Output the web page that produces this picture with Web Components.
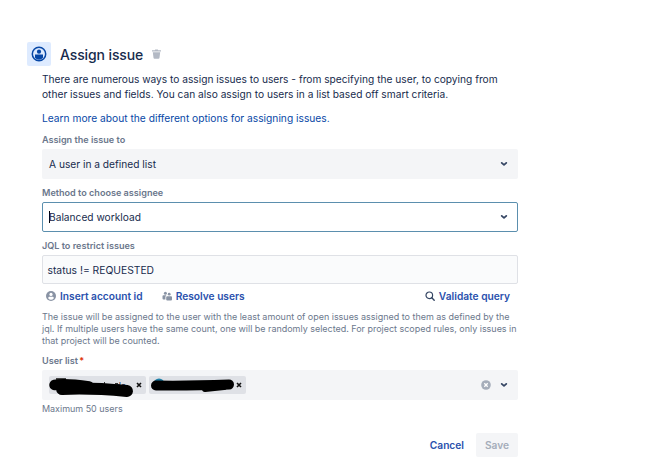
<!DOCTYPE html>
<html lang="en"><head><meta charset="utf-8"><title>Assign issue</title>
<style>
body{margin:0;background:#fff;font-family:Inter,"Liberation Sans",sans-serif;color:#172b4d}
</style></head><body>
<assign-page></assign-page>
<script>
function define(name, html){
  const t=document.createElement('template'); t.innerHTML=html;
  customElements.define(name, class extends HTMLElement{
    constructor(){super();this.attachShadow({mode:'open'}).append(t.content.cloneNode(true));}
  });
}
define('page-title', `<style>
:host{display:flex;align-items:center;height:24px}
.badge{width:24px;height:24px;background:#deebff;border-radius:2px;display:flex;align-items:center;justify-content:center}
h1{margin:0 0 0 9px;font-size:14px;font-weight:500;line-height:24px;letter-spacing:-.12px;white-space:nowrap;padding-top:1px}
svg{display:block}.bin{margin-left:9px}
</style><div class="badge"><svg width="16" height="16" viewBox="0 0 16 16"><circle cx="8" cy="8" r="6.7" fill="none" stroke="#0747a6" stroke-width="1.5"/><circle cx="8" cy="5.7" r="2.1" fill="#0747a6"/><path d="M4 8.5h8v3.2q-1.600 2-4 2t-4-2z" fill="#0747a6"/></svg></div>
<h1><slot></slot></h1><svg class="bin" width="9" height="10" viewBox="0 0 9 10"><path d="M0 1.200h2.800L3.200.4h2.600l.4.800H9v1.400H0zM.8 3.200h7.400L7.500 8.800q-.1.900-1 .9h-4q-.9 0-1-.9z" fill="#b3b9c4"/></svg>`);
define('field-label', `<style>:host{display:block;font-size:9.1px;font-weight:600;line-height:12px;height:12px;color:#6b778c;white-space:nowrap}</style><slot></slot>`);
define('chevron-icon', `<style>:host{display:block;width:8px;height:6px}svg{display:block}</style><svg width="8" height="6" viewBox="0 0 8 6"><path d="M1.700 1.900L4 3.900l2.300-2" fill="none" stroke="#344563" stroke-width="1.800" stroke-linecap="round" stroke-linejoin="round"/></svg>`);
define('select-box', `<style>
:host{display:flex;align-items:center;box-sizing:border-box;height:30px;padding:0 10px 0 7px;background:#f4f5f7;border-radius:2px;font-size:10.2px;color:#172b4d;white-space:nowrap}
:host([focused]){background:#fff;border:1px solid #5b8fae;padding:0 9px 0 6px}
.v{flex:1;display:flex;align-items:center}
.caret{display:none;width:1px;height:12px;background:#000;margin-right:-1px}
:host([focused]) .caret{display:block}
</style><div class="v"><span class="caret"></span><slot></slot></div><slot name="extra"></slot><chevron-icon></chevron-icon>`);
define('text-input', `<style>:host{display:flex;align-items:center;box-sizing:border-box;height:29px;border:1px solid #dfe1e6;border-radius:2px;background:#fafbfc;padding:1px 5px 0 4.500px;font-size:10.3px}</style><slot></slot>`);
define('link-action', `<style>:host{display:flex;align-items:center;height:14px;font-size:10.200px;font-weight:600;color:#2a51ad;white-space:nowrap}::slotted(svg){display:block;margin-right:4px}</style><slot></slot>`);
define('user-tag', `<style>:host{display:flex;align-items:center;justify-content:flex-end;box-sizing:border-box;height:18px;padding-right:4px;background:#dfe1e6;border-radius:2px;position:relative}
.x{display:block;margin-left:10px}.ink{position:absolute;left:0;top:0;display:block}.t{font-size:9px;padding-top:2px}</style><span class="t"><slot></slot></span><svg class="x" width="6" height="6" viewBox="0 0 6 6"><path d="M1 1l4 4M5 1L1 5" stroke="#111" stroke-width="1.600"/></svg><span class="ink"><slot name="ink"></slot></span>`);
define('action-button', `<style>:host{display:flex;align-items:center;justify-content:center;height:24px;font-size:10.200px;font-weight:600;color:#2a51ad}:host([disabled]){width:42px;background:#f4f5f7;border-radius:2px;color:#a5adba}</style><slot></slot>`);
define('assign-page', `<style>
:host{display:block;box-sizing:border-box;width:659px;height:470px;padding:42px 0 0 27px;overflow:hidden}
main{margin-left:15px;width:476px}
p{margin:0;white-space:nowrap}
.desc{padding-top:6px;font-size:10.200px;line-height:15px}
.learn{padding-top:9px;font-size:10.230px;line-height:15px;color:#0747a6}
.l1{margin:8px 0 3px}.l2{margin:8px 0 3px}
.actions{display:flex;margin-top:5px;padding:0 8px 0 4px;align-items:center}
.actions link-action:nth-child(2){margin-left:19px}.actions link-action:last-child{margin-left:auto}
.help{margin-top:8px;font-size:8.960px;line-height:12.200px;color:#6b778c}
.l3{margin-top:7px;margin-bottom:3px}
b{color:#de350b;font-weight:600;margin-left:-1px}
.tags{display:flex;gap:3px}.tags user-tag{width:97px}
.clear{margin-right:9px;display:block}
.max{font-size:8.960px;line-height:12px;color:#6b778c;margin-top:3px}
footer{display:flex;justify-content:flex-end;gap:12px;margin-top:18px}
</style>
<page-title>Assign issue</page-title>
<main>
<p class="desc">There are numerous ways to assign issues to users - from specifying the user, to copying from<br>other issues and fields. You can also assign to users in a list based off smart criteria.</p>
<p class="learn">Learn more about the different options for assigning issues.</p>
<field-label class="l1">Assign the issue to</field-label>
<select-box>A user in a defined list</select-box>
<field-label class="l2">Method to choose assignee</field-label>
<select-box focused>Balanced workload</select-box>
<field-label class="l2">JQL to restrict issues</field-label>
<text-input>status != REQUESTED</text-input>
<div class="actions">
<link-action><svg width="10" height="10" viewBox="0 0 10 10"><circle cx="5" cy="5" r="5" fill="#8993a4"/><circle cx="5" cy="3.400" r="1.600" fill="#fff"/><path d="M2.300 7.500V6.700q0-1 1-1h3.400q1 0 1 1v.8Q6.600 8.700 5 8.700T2.300 7.500z" fill="#fff"/></svg>Insert account id</link-action>
<link-action><svg width="10" height="10" viewBox="0 0 10 10" fill="#8993a4"><circle cx="3.400" cy="2.200" r="1.500"/><circle cx="7.200" cy="3.200" r="1.400"/><path d="M.5 7.500V5.200q0-1 1-1h2.700v.6q-.8.300-.8 1.400v2.300H1.500q-1 0-1-1zM4.200 6.200q0-1 1-1H9q1 0 1 1v2.300q0 1-1 1H5.200q-1 0-1-1z"/></svg>Resolve users</link-action>
<link-action><svg width="10" height="10" viewBox="0 0 10 10"><circle cx="4.300" cy="4.300" r="3.300" fill="none" stroke="#344563" stroke-width="1.200"/><path d="M6.800 6.800l2.400 2.400" stroke="#344563" stroke-width="1.400" stroke-linecap="round"/></svg>Validate query</link-action>
</div>
<p class="help">The issue will be assigned to the user with the least amount of open issues assigned to them as defined by the<br>jql. If multiple users have the same count, one will be randomly selected. For project scoped rules, only issues in<br>that project will be counted.</p>
<field-label class="l3">User list <b>*</b></field-label>
<select-box><div class="tags">
<user-tag>da<svg slot="ink" width="97" height="22" style="display:block;overflow:visible"><path d="M7 2h10v4H7z" fill="#444"/><path d="M55 8.500V6h1v3M66 8.500V7h3v2" fill="#333"/><path d="M5.500 9Q16 7 40 10.500" fill="none" stroke="#000" stroke-width="10.500" stroke-linecap="round"/><path d="M13 13Q40 11.500 78 15" fill="none" stroke="#000" stroke-width="12" stroke-linecap="round"/></svg></user-tag>
<user-tag><svg slot="ink" width="97" height="22" style="display:block;overflow:visible"><circle cx="10" cy="8" r="5.500" fill="#1d7fa8"/><path d="M7 9.500Q40 10 80 8.500" fill="none" stroke="#000" stroke-width="10" stroke-linecap="round"/><path d="M56 13L75 11" fill="none" stroke="#000" stroke-width="6" stroke-linecap="round"/></svg></user-tag>
</div><svg slot="extra" class="clear" width="10" height="10" viewBox="0 0 10 10"><circle cx="5" cy="5" r="4.800" fill="#a5adba"/><path d="M3.300 3.300l3.400 3.400M6.700 3.300L3.300 6.700" stroke="#fff" stroke-width="1.300"/></svg></select-box>
<p class="max">Maximum 50 users</p>
<footer><action-button>Cancel</action-button><action-button disabled>Save</action-button></footer>
</main>`);
</script></body></html>
